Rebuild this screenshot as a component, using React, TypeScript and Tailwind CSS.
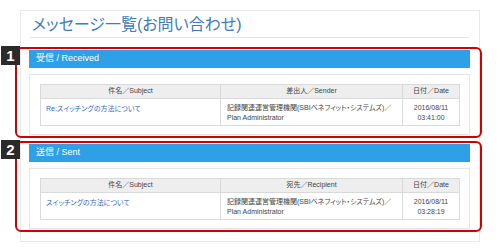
import React from "react";

const font = { fontFamily: '"Liberation Sans", "Noto Sans CJK JP", sans-serif' };

type Row = { subject: string; who: string; date: string; time: string };

function Section({
  num,
  title,
  whoLabel,
  row,
}: {
  num: string;
  title: string;
  whoLabel: string;
  row: Row;
}) {
  return (
    <div className="relative">
      <div className="absolute -left-[14px] -right-[12px] -top-[3px] -bottom-[3px] border-2 border-[#d40000] rounded-[6px] pointer-events-none" />
      <div className="absolute -left-[28px] -top-[4px] w-[19px] h-[19px] bg-[#2b2b2b] text-white flex items-center justify-center text-[15px] font-bold leading-none">
        {num}
      </div>
      <div className="h-[18px] bg-[#2f9fe7] text-white text-[9px] flex items-center pl-[7px] [font-feature-settings:'palt']">
        {title}
      </div>
      <div className="mt-[6px] border border-[#e6e6e6] pt-[9px] pb-[8px] pl-[10px] pr-[9px]">
        <table className="w-full border-collapse text-[7px] [font-feature-settings:'palt'] text-[#444]">
          <thead>
            <tr className="bg-[#eeeeee] h-[14px]">
              <th className="border border-[#d9d9d9] font-normal w-[180px] text-center">件名／Subject</th>
              <th className="border border-[#d9d9d9] font-normal w-[182px] text-center">{whoLabel}</th>
              <th className="border border-[#d9d9d9] font-normal text-center">日付／Date</th>
            </tr>
          </thead>
          <tbody>
            <tr className="h-[27px] align-top">
              <td className="border border-[#d9d9d9] pl-[5px] pt-[5px] text-[#3366cc]">{row.subject}</td>
              <td className="border border-[#d9d9d9] pl-[6px] pt-[4px] leading-[10px]">
                {row.who}
                <br />
                Plan Administrator
              </td>
              <td className="border border-[#d9d9d9] pt-[4px] text-center leading-[10px]">
                {row.date}
                <br />
                {row.time}
              </td>
            </tr>
          </tbody>
        </table>
      </div>
    </div>
  );
}

export default function App() {
  return (
    <div className="w-[500px] h-[249px] bg-white pt-[10px] pl-[20px]" style={font}>
      <div className="w-[460px] h-[232px] border border-[#e8e8e8] pl-[8px] pr-[9px]">
        <div className="mx-[1px] h-[27px] border-b border-[#e6e6e6] pl-[2px] pt-[5px] text-[16px] leading-[18px] text-[#3b7bbf] [font-feature-settings:'palt']">
          メッセージ一覧(お問い合わせ)
        </div>
        <div className="mt-[12px]">
          <Section
            num="1"
            title="受信 / Received"
            whoLabel="差出人／Sender"
            row={{
              subject: "Re:スイッチングの方法について",
              who: "記録関連運営管理機関(SBIベネフィット・システムズ)／",
              date: "2016/08/11",
              time: "03:41:00",
            }}
          />
        </div>
        <div className="mt-[9px]">
          <Section
            num="2"
            title="送信 / Sent"
            whoLabel="宛先／Recipient"
            row={{
              subject: "スイッチングの方法について",
              who: "記録関連運営管理機関(SBIベネフィット・システムズ)／",
              date: "2016/08/11",
              time: "03:28:19",
            }}
          />
        </div>
      </div>
    </div>
  );
}
